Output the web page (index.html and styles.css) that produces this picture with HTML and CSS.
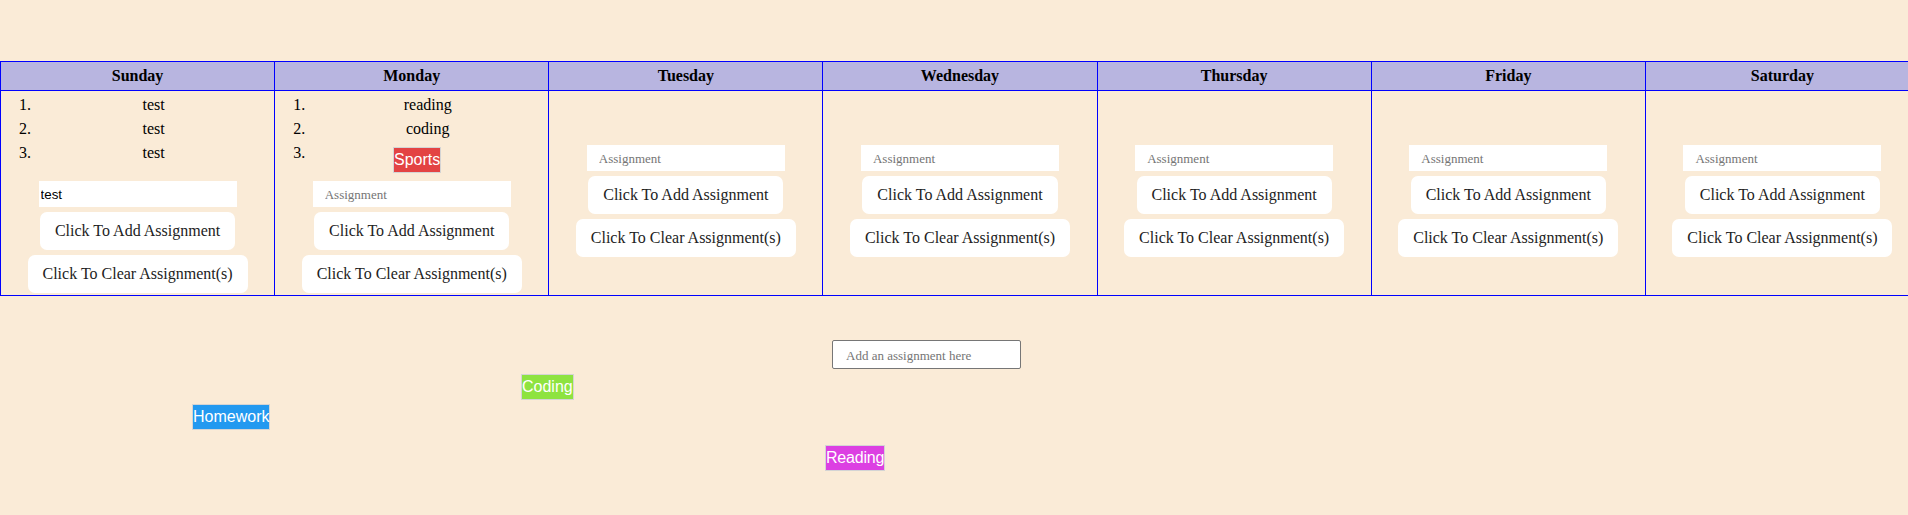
FILE: index.html
```html
<!DOCTYPE html>
<html lang="en">
<head>
<meta charset="utf-8">
<title>Weekly Assignments</title>
<link rel="stylesheet" href="styles.css">
</head>
<body>
<main class="page">
  <table class="week">
    <thead>
      <tr>
        <th>Sunday</th><th>Monday</th><th>Tuesday</th><th>Wednesday</th><th>Thursday</th><th>Friday</th><th>Saturday</th>
      </tr>
    </thead>
    <tbody>
      <tr>
        <td>
          <ol class="list"><li>test</li><li>test</li><li>test</li></ol>
          <div class="form">
            <input class="field filled" type="text" value="test">
            <button class="btn">Click To Add Assignment</button>
            <button class="btn">Click To Clear Assignment(s)</button>
          </div>
        </td>
        <td>
          <ol class="list"><li>reading</li><li>coding</li><li></li></ol>
          <div class="form">
            <input class="field" type="text" placeholder="Assignment">
            <button class="btn">Click To Add Assignment</button>
            <button class="btn">Click To Clear Assignment(s)</button>
          </div>
        </td>
        <td>
          <ol class="list"></ol>
          <div class="form">
            <input class="field" type="text" placeholder="Assignment">
            <button class="btn">Click To Add Assignment</button>
            <button class="btn">Click To Clear Assignment(s)</button>
          </div>
        </td>
        <td>
          <ol class="list"></ol>
          <div class="form">
            <input class="field" type="text" placeholder="Assignment">
            <button class="btn">Click To Add Assignment</button>
            <button class="btn">Click To Clear Assignment(s)</button>
          </div>
        </td>
        <td>
          <ol class="list"></ol>
          <div class="form">
            <input class="field" type="text" placeholder="Assignment">
            <button class="btn">Click To Add Assignment</button>
            <button class="btn">Click To Clear Assignment(s)</button>
          </div>
        </td>
        <td>
          <ol class="list"></ol>
          <div class="form">
            <input class="field" type="text" placeholder="Assignment">
            <button class="btn">Click To Add Assignment</button>
            <button class="btn">Click To Clear Assignment(s)</button>
          </div>
        </td>
        <td>
          <ol class="list"></ol>
          <div class="form">
            <input class="field" type="text" placeholder="Assignment">
            <button class="btn">Click To Add Assignment</button>
            <button class="btn">Click To Clear Assignment(s)</button>
          </div>
        </td>
      </tr>
    </tbody>
  </table>

  <div class="add-row">
    <input class="add-input" type="text" placeholder="Add an assignment here">
  </div>

  <div class="chip chip-sports" style="left:393px;top:147px">Sports</div>
  <div class="chip chip-coding" style="left:521px;top:374px">Coding</div>
  <div class="chip chip-homework" style="left:192px;top:404px">Homework</div>
  <div class="chip chip-reading" style="left:825px;top:445px">Reading</div>
</main>
</body>
</html>
```

FILE: styles.css
```css
html, body {
  margin: 0;
  overflow: hidden;
  background: #faebd7;
}

body {
  font-family: "Liberation Serif", "Times New Roman", serif;
  font-size: 16px;
  color: #000;
}

.page {
  position: relative;
  box-sizing: border-box;
  min-height: 515px;
  padding-top: 61px;
}

.week {
  border-collapse: collapse;
  table-layout: fixed;
  width: 1920px;
}

.week th,
.week td {
  border: 1px solid #0000ff;
}

.week th {
  background: #b8b5e0;
  height: 28px;
  padding: 0;
  font-weight: bold;
  text-align: center;
}

.week td {
  padding: 2px;
  vertical-align: middle;
  text-align: center;
}

.list {
  margin: 0 0 16px;
  padding-left: 32px;
}

.list li {
  line-height: 24px;
  min-height: 24px;
}

.form {
  display: flex;
  flex-direction: column;
  align-items: center;
  gap: 5px;
}

.field {
  box-sizing: border-box;
  width: 198px;
  height: 26px;
  border: none;
  outline: none;
  background: #fff;
  padding: 2px 12px 0;
  font-family: "Liberation Serif", serif;
  font-size: 13px;
  color: #000;
}

.field::placeholder {
  color: #757575;
}

.field.filled {
  padding: 0 2px;
  font-family: "Liberation Sans", Arial, sans-serif;
  font-size: 13.33px;
}

.btn {
  font-family: "Liberation Serif", serif;
  font-size: 16px;
  line-height: 18px;
  padding: 10px 15px;
  border: none;
  border-radius: 7px;
  background: #fff;
  color: #222;
}

.add-row {
  display: flex;
  justify-content: center;
  padding-right: 55px;
  margin-top: 44px;
}

.add-input {
  box-sizing: border-box;
  width: 189px;
  height: 29px;
  border: 1px solid #767676;
  border-radius: 2px;
  background: #fff;
  padding: 2px 13px 0;
  font-family: "Liberation Serif", serif;
  font-size: 13px;
}

.add-input::placeholder {
  color: #757575;
}

.chip {
  position: absolute;
  font-family: "Liberation Sans", Arial, sans-serif;
  font-size: 16px;
  line-height: 24px;
  color: #fff;
  border: 1px solid #d4d4d4;
  padding: 0;
}

.chip-sports { background: #e34343; }
.chip-coding { background: #8ee340; }
.chip-homework { background: #2299f0; }
.chip-reading { background: #dc3fe2; letter-spacing: -0.2px; }
```
